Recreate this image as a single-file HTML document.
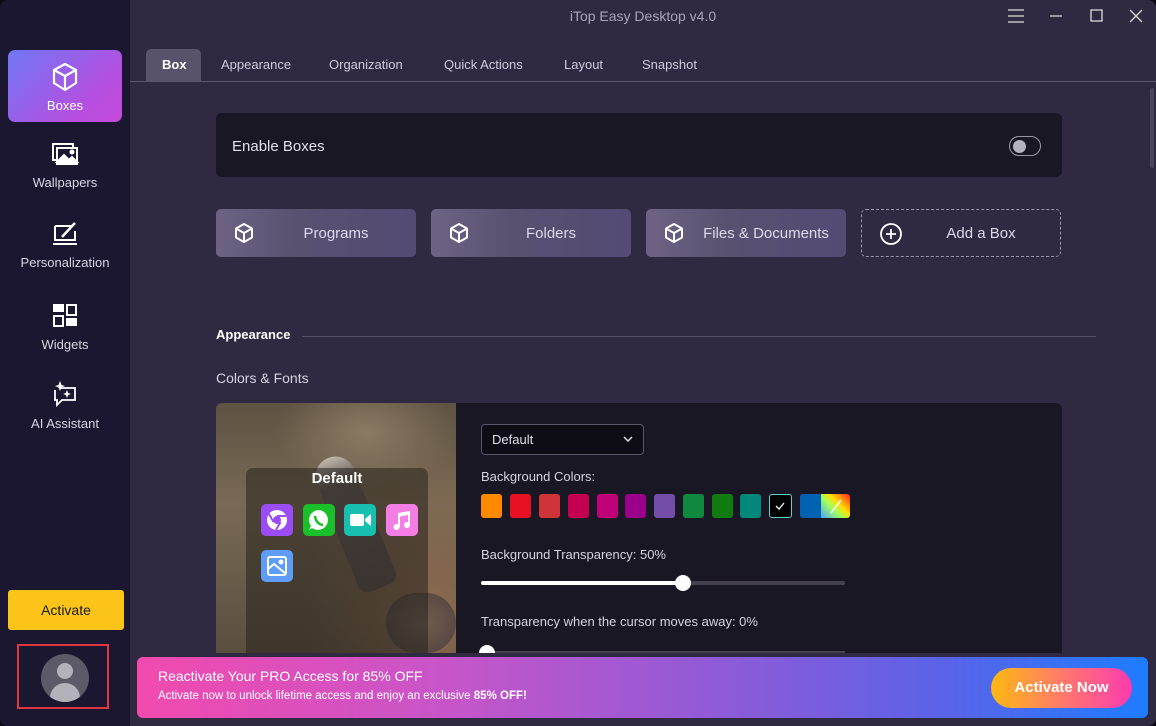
<!DOCTYPE html>
<html><head><meta charset="utf-8"><style>
*{margin:0;padding:0;box-sizing:border-box}
body{width:1156px;height:726px;overflow:hidden;background:#0c0a12;font-family:"Liberation Sans",sans-serif;color:#e6e4ee;position:relative}
.win{position:absolute;left:0;top:0;width:1156px;height:726px;background:#2f2a42;border-radius:8px;overflow:hidden}
.side{position:absolute;left:0;top:0;width:130px;height:726px;background:#1c1730}
.nav{position:absolute;left:8px;width:114px;height:72px;text-align:center;font-size:13px;color:#d8d6e2}
.nav svg{display:block;margin:0 auto 8px}
.abs{position:absolute}
.tab{position:absolute;top:49px;height:32px;line-height:32px;font-size:13px;color:#cfcbdc}
.btn{position:absolute;top:209px;width:200px;height:48px;border-radius:5px;background:linear-gradient(90deg,#6e6385,#5a5070 40%,#544a74);font-size:15px;color:#ddd9ea;line-height:48px}
.btn svg{position:absolute;left:17px;top:13px}
.btn span{position:absolute;left:0;right:0;top:1px;text-align:center;padding-left:40px}
.sw{position:absolute;top:494px;width:21px;height:24px;border-radius:3px}
</style></head><body><div class="win">
<div class="side">
 <div class="nav" style="top:50px;background:linear-gradient(135deg,#6f78f5,#b44fe0 70%,#c64ad9);border-radius:7px;color:#fff;padding-top:12px">
  <svg width="28" height="30" viewBox="0 0 28 30" fill="none" stroke="#fff" stroke-width="2.2" stroke-linejoin="round" style="margin-bottom:6px"><path d="M14 2 L25 8 V21 L14 28 L3 21 V8 Z M3 8 L14 14 L25 8 M14 14 V28"/></svg>Boxes</div>
 <div class="nav" style="top:141px"><svg width="28" height="26" viewBox="0 0 28 26" fill="none" stroke="#fff" stroke-width="2"><rect x="2" y="3" width="20" height="16"/><rect x="6" y="7" width="20" height="16" fill="#1c1730"/><path d="M6 21 L13 14 L18 19 L21 16 L26 21 Z" fill="#fff"/><circle cx="21" cy="11" r="1.5" fill="#fff"/></svg>Wallpapers</div>
 <div class="nav" style="top:221px"><svg width="28" height="26" viewBox="0 0 28 26" fill="none" stroke="#fff" stroke-width="2"><path d="M4 5 H20 M4 5 V19 H24 V10"/><path d="M2 23 H26"/><path d="M11 16 L22 4 L24 2" stroke-width="2.5"/></svg>Personalization</div>
 <div class="nav" style="top:303px"><svg width="26" height="26" viewBox="0 0 26 26" fill="#fff"><rect x="1" y="1" width="11" height="8"/><rect x="2" y="13" width="9" height="10" fill="none" stroke="#fff" stroke-width="2"/><rect x="15" y="2" width="9" height="10" fill="none" stroke="#fff" stroke-width="2"/><rect x="14" y="15" width="11" height="8"/></svg>Widgets</div>
 <div class="nav" style="top:380px"><svg width="26" height="28" viewBox="0 0 26 28" fill="none" stroke="#fff" stroke-width="1.8"><path d="M9 8 H23 V20 H10 L5 25 V20 H3 V10"/><path d="M8 1 L9.5 5 L13 6 L9.5 7.5 L8 11 L6.5 7.5 L3 6 L6.5 5 Z" fill="#fff" stroke="none"/><path d="M15 10 L16.2 13 L19 14 L16.2 15 L15 18 L13.8 15 L11 14 L13.8 13 Z" fill="#fff" stroke="none"/></svg>AI Assistant</div>
 <div class="abs" style="left:8px;top:590px;width:116px;height:40px;background:#fcc419;border-radius:3px;color:#1a1a1a;font-size:14px;text-align:center;line-height:40px">Activate</div>
 <div class="abs" style="left:17px;top:644px;width:92px;height:65px;border:2.5px solid #e0363f"></div>
 <div class="abs" style="left:41px;top:654px;width:48px;height:48px;border-radius:50%;background:#5c5a66;overflow:hidden"><div class="abs" style="left:16px;top:9px;width:16px;height:16px;border-radius:50%;background:#b3b2ba"></div><div class="abs" style="left:9px;top:29px;width:30px;height:20px;border-radius:15px 15px 0 0;background:#b3b2ba"></div></div>
</div>
<div class="abs" style="left:130px;top:8px;width:1026px;text-align:center;font-size:14px;color:#a8a4b8">iTop Easy Desktop v4.0</div>
<svg class="abs" style="left:1000px;top:6px" width="150" height="20" fill="none" stroke="#ddd" stroke-width="1.3"><path d="M8 4 H24 M8 10 H24 M8 16 H24 M50 10 H62 M91 4 H102 V15 H91 Z M130 4 L142 16 M142 4 L130 16"/></svg>
<div class="abs" style="left:146px;top:49px;width:55px;height:32px;background:#58536a;border-radius:5px 5px 0 0"></div>
<div class="tab" style="left:162px;color:#fff;font-weight:bold">Box</div>
<div class="tab" style="left:221px">Appearance</div>
<div class="tab" style="left:329px">Organization</div>
<div class="tab" style="left:444px">Quick Actions</div>
<div class="tab" style="left:564px">Layout</div>
<div class="tab" style="left:642px">Snapshot</div>
<div class="abs" style="left:130px;top:81px;width:1026px;height:1px;background:#5a566c"></div>
<div class="abs" style="left:1150px;top:88px;width:4px;height:80px;background:#4a465a;border-radius:2px"></div>
<div class="abs" style="left:216px;top:113px;width:846px;height:64px;background:#1a1724;border-radius:6px"></div>
<div class="abs" style="left:232px;top:138px;font-size:15px;color:#e2e0ea">Enable Boxes</div>
<div class="abs" style="left:1009px;top:136px;width:32px;height:20px;border:1.3px solid #9a98a4;border-radius:10px"><div class="abs" style="left:3px;top:2.5px;width:13px;height:13px;border-radius:50%;background:#b4b2bc"></div></div>
<div class="btn" style="left:216px"><svg width="22" height="22" viewBox="0 0 22 22" fill="none" stroke="#fff" stroke-width="2" stroke-linejoin="round"><path d="M11 2 L19 6.5 V15.5 L11 20 L3 15.5 V6.5 Z M3 6.5 L11 11 L19 6.5 M11 11 V20"/></svg><span>Programs</span></div>
<div class="btn" style="left:431px"><svg width="22" height="22" viewBox="0 0 22 22" fill="none" stroke="#fff" stroke-width="2" stroke-linejoin="round"><path d="M11 2 L19 6.5 V15.5 L11 20 L3 15.5 V6.5 Z M3 6.5 L11 11 L19 6.5 M11 11 V20"/></svg><span>Folders</span></div>
<div class="btn" style="left:646px"><svg width="22" height="22" viewBox="0 0 22 22" fill="none" stroke="#fff" stroke-width="2" stroke-linejoin="round"><path d="M11 2 L19 6.5 V15.5 L11 20 L3 15.5 V6.5 Z M3 6.5 L11 11 L19 6.5 M11 11 V20"/></svg><span>Files &amp; Documents</span></div>
<div class="btn" style="left:861px;background:none;border:1.3px dashed #9b97aa"><svg width="24" height="24" viewBox="0 0 24 24" fill="none" stroke="#fff" stroke-width="1.8" style="top:12px"><circle cx="12" cy="12" r="10"/><path d="M12 7 V17 M7 12 H17"/></svg><span style="top:0">Add a Box</span></div>
<div class="abs" style="left:216px;top:327px;font-size:13px;font-weight:bold;color:#fff">Appearance</div>
<div class="abs" style="left:302px;top:336px;width:794px;height:1px;background:#56526a"></div>
<div class="abs" style="left:216px;top:370px;font-size:14px;color:#d6d3e0">Colors &amp; Fonts</div>
<div class="abs" style="left:216px;top:403px;width:846px;height:250px;background:#1a1724;border-radius:6px 6px 0 0;overflow:hidden">
 <div class="abs" style="left:0;top:0;width:240px;height:250px;background:radial-gradient(ellipse 130px 170px at 220px 210px,#8a6a4e,transparent),radial-gradient(ellipse 90px 60px at 150px 30px,#8a7a62,transparent),linear-gradient(180deg,#5e5242,#786a54 40%,#5a4e3e)"></div>
 <div class="abs" style="left:92px;top:55px;width:40px;height:140px;background:linear-gradient(#d8d0c8,#5a5258 20%,#4a4348);transform:rotate(-22deg);transform-origin:top;border-radius:20px 20px 10px 10px;opacity:.75"></div>
 <div class="abs" style="left:170px;top:190px;width:70px;height:60px;background:radial-gradient(#6a5a50,#3a3238);border-radius:30px;opacity:.7"></div>
 <div class="abs" style="left:30px;top:65px;width:182px;height:190px;background:rgba(40,34,30,.55);border-radius:7px"></div>
 <div class="abs" style="left:30px;top:67px;width:182px;text-align:center;font-weight:bold;font-size:15px;color:#fff">Default</div>
 <div class="abs" style="left:45px;top:101px;width:32px;height:32px;background:#9b4cf5;border-radius:5px"><svg width="32" height="32"><circle cx="16" cy="16" r="10" fill="#fff"/><circle cx="16" cy="16" r="4" fill="#9b4cf5"/><path d="M16 12 H25 M12.5 18 L8 10 M19.5 18 L15 26" stroke="#9b4cf5" stroke-width="2"/></svg></div>
 <div class="abs" style="left:87px;top:101px;width:32px;height:32px;background:#19c02a;border-radius:5px"><svg width="32" height="32"><path d="M16 6 A10 10 0 1 1 9 24 L6 26 L8 22 A10 10 0 0 1 16 6 Z" fill="#fff"/><path d="M12 12 Q13 20 20 21" stroke="#19c02a" stroke-width="2.5" fill="none"/></svg></div>
 <div class="abs" style="left:128px;top:101px;width:32px;height:32px;background:#17bfae;border-radius:5px"><svg width="32" height="32" fill="#fff"><rect x="6" y="10" width="14" height="12" rx="2"/><path d="M21 15 L27 10 V22 L21 17 Z"/></svg></div>
 <div class="abs" style="left:170px;top:101px;width:32px;height:32px;background:#f57ee6;border-radius:5px"><svg width="32" height="32" fill="#fff"><path d="M12 9 L24 7 V21 H22 V11 L14 12.5 V23 H12 Z"/><circle cx="10.5" cy="23" r="3"/><circle cx="21" cy="21" r="3"/></svg></div>
 <div class="abs" style="left:45px;top:147px;width:32px;height:32px;background:#5f9cf7;border-radius:5px"><svg width="32" height="32" fill="none" stroke="#fff" stroke-width="2"><rect x="7" y="7" width="18" height="18" rx="2"/><path d="M7 19 L13 14 L25 24"/><circle cx="20" cy="12" r="1.5" fill="#fff"/></svg></div>
 <div class="abs" style="left:265px;top:21px;width:163px;height:31px;border:1px solid #5a566a;border-radius:4px;background:#0e0c14;font-size:13px;color:#e0dee8;padding:7px 10px">Default<svg class="abs" style="right:10px;top:11px" width="10" height="7" fill="none" stroke="#ddd" stroke-width="1.5"><path d="M1 1 L5 5 L9 1"/></svg></div>
 <div class="abs" style="left:265px;top:66px;font-size:13px;color:#d6d3e0">Background Colors:</div>
 <div class="abs" style="left:265px;top:144px;font-size:13px;color:#d6d3e0">Background Transparency: 50%</div>
 <div class="abs" style="left:265px;top:178px;width:364px;height:4px;background:#45414f;border-radius:2px"></div>
 <div class="abs" style="left:265px;top:178px;width:202px;height:4px;background:#fff;border-radius:2px"></div>
 <div class="abs" style="left:459px;top:172px;width:16px;height:16px;background:#fff;border-radius:50%"></div>
 <div class="abs" style="left:265px;top:211px;font-size:13px;color:#d6d3e0">Transparency when the cursor moves away: 0%</div>
 <div class="abs" style="left:265px;top:248px;width:364px;height:4px;background:#45414f"></div>
 <div class="abs" style="left:263px;top:242px;width:16px;height:16px;background:#fff;border-radius:50%"></div>
</div>
<div class="sw" style="left:481px;background:#ff8a00"></div>
<div class="sw" style="left:510px;background:#e81123"></div>
<div class="sw" style="left:539px;background:#d13438"></div>
<div class="sw" style="left:568px;background:#c30052"></div>
<div class="sw" style="left:597px;background:#bf0077"></div>
<div class="sw" style="left:625px;background:#9a0089"></div>
<div class="sw" style="left:654px;background:#744da9"></div>
<div class="sw" style="left:683px;background:#10893e"></div>
<div class="sw" style="left:712px;background:#107c10"></div>
<div class="sw" style="left:740px;background:#00897b"></div>
<div class="sw" style="left:769px;width:23px;background:#000;border:1.3px solid #5fd0d0"><svg width="20" height="22" fill="none" stroke="#fff" stroke-width="1.3"><path d="M6 11 L9 14 L14 8"/></svg></div>
<div class="sw" style="left:800px;background:#0063b1;border-radius:3px 0 0 3px"></div>
<div class="sw" style="left:821px;width:29px;border-radius:0 3px 3px 0;background:linear-gradient(45deg,#4aa0ff,#a0ff60 40%,#ffe000 60%,#ff2020)"><svg width="29" height="24" stroke="#fff" stroke-width="1.5"><path d="M10 19 L20 6"/></svg></div>
<div class="abs" style="left:137px;top:657px;width:1011px;height:61px;border-radius:6px;background:linear-gradient(90deg,#f24aae,#c855c8 30%,#8a5bd8 60%,#5a63e8 80%,#1f7cff)"></div>
<div class="abs" style="left:158px;top:668px;font-size:14px;color:#fff">Reactivate Your PRO Access for 85% OFF</div>
<div class="abs" style="left:158px;top:690px;font-size:11.5px;color:#fff">Activate now to unlock lifetime access and enjoy an exclusive <b>85% OFF!</b></div>
<div class="abs" style="left:991px;top:668px;width:141px;height:40px;border-radius:20px;background:linear-gradient(90deg,#fdb913,#ff7a6a 50%,#fb3ab0);color:#fff;font-weight:bold;font-size:15px;text-align:center;line-height:40px">Activate Now</div>
</div></body></html>
